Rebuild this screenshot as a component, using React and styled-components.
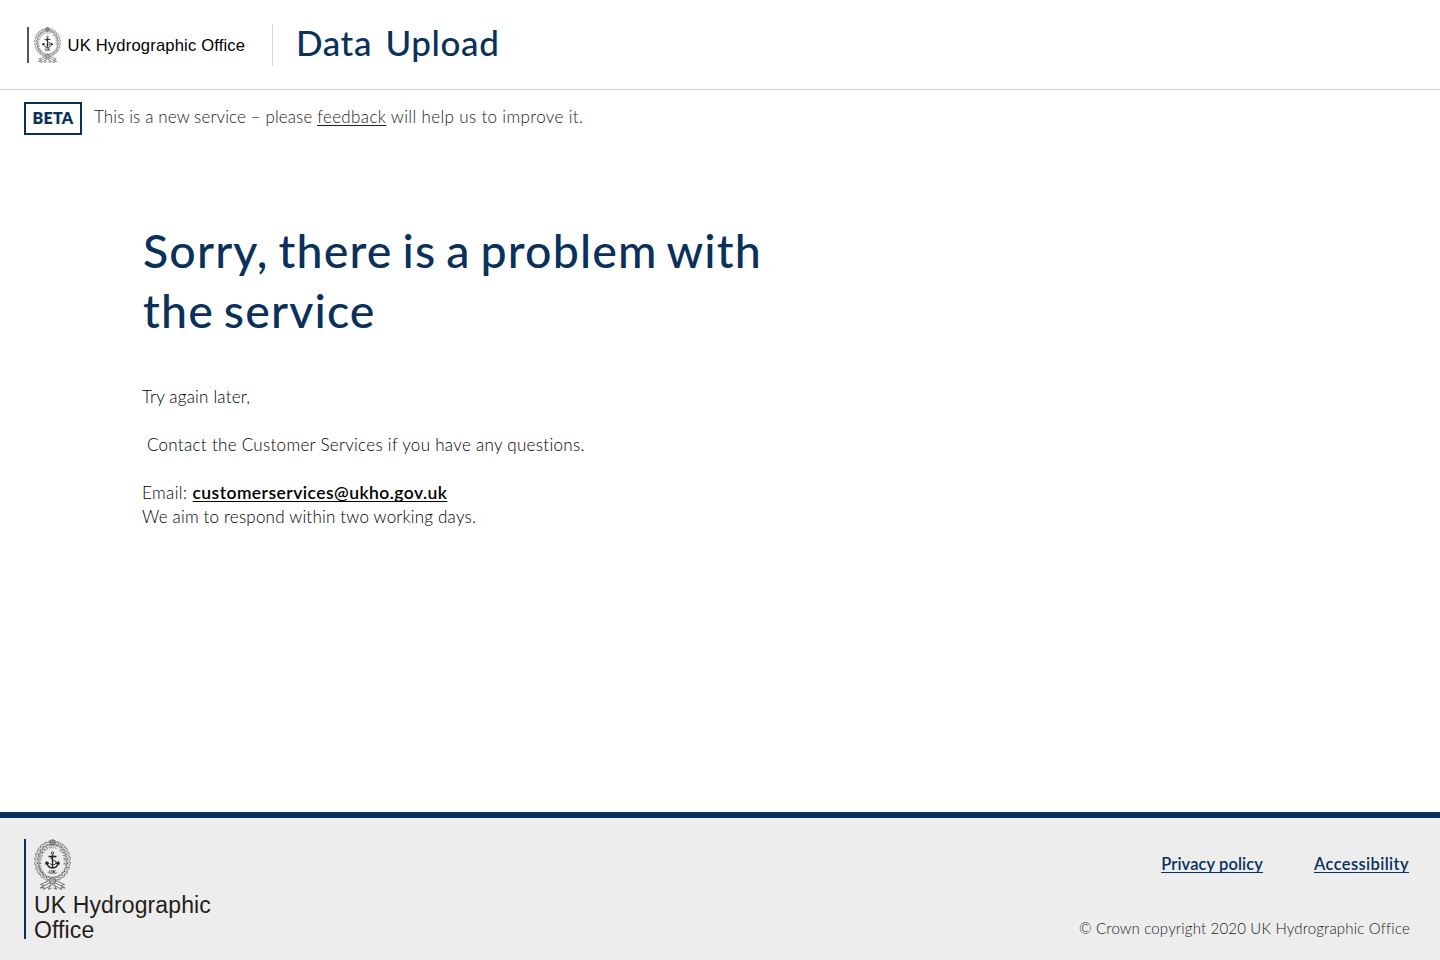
import React from "react";
import styled, { createGlobalStyle } from "styled-components";

const navy = "#09315b";

const GlobalStyle = createGlobalStyle`
  *, *::before, *::after { box-sizing: border-box; }
  body { margin: 0; background: #fff; font-family: Lato, "Liberation Sans", sans-serif; font-variant-ligatures: none; }
`;

const Page = styled.div`
  display: flex;
  flex-direction: column;
  height: 960px;
  overflow: hidden;
`;

const Header = styled.header`
  display: flex;
  align-items: flex-start;
  height: 90px;
  padding: 24px 24px 0 27px;
  border-bottom: 1px solid #d5d5d5;
`;

const HeaderBrand = styled.a`
  display: flex;
  width: 246px;
  height: 42px;
  padding-top: 3px;
  border-right: 1px solid #d5d5d5;
`;

const HeaderMark = styled.span`
  height: 36px;
  padding-left: 5px;
  border-left: 2px solid #555;
`;

const HeaderBrandName = styled.span`
  margin-left: 6.5px;
  padding-top: 9px;
  font: 16.6px/20px "Liberation Sans", Arial, sans-serif;
  letter-spacing: 0.17px;
  color: #000;
  white-space: nowrap;
`;

const ServiceName = styled.span`
  margin-left: 23px;
  font-size: 35px;
  font-weight: 500;
  line-height: 36px;
  letter-spacing: 0.6px;
  word-spacing: 4px;
  color: ${navy};
  white-space: nowrap;
`;

const PhaseBanner = styled.div`
  display: flex;
  align-items: flex-start;
  padding: 12px 24px 0;
`;

const PhaseTag = styled.strong`
  width: 58px;
  height: 33px;
  border: 2px solid ${navy};
  font-size: 16px;
  font-weight: 800;
  line-height: 28px;
  letter-spacing: 0.3px;
  text-align: center;
  color: ${navy};
`;

const PhaseText = styled.span`
  margin-left: 12px;
  padding-top: 3px;
  font-size: 17px;
  font-weight: 300;
  line-height: 24px;
  letter-spacing: 0.11px;
  color: #222;
  white-space: nowrap;
`;

const InlineLink = styled.a`
  color: inherit;
  text-decoration: underline;
  text-decoration-thickness: 1px;
  text-underline-offset: 2px;
  text-decoration-skip-ink: none;
`;

const PhaseTail = styled.span`
  letter-spacing: 0.35px;
`;

const Main = styled.main`
  flex: 1;
  padding: 85px 142px 0;
`;

const Title = styled.h1`
  width: 660px;
  margin: 0 0 45px;
  padding-left: 1px;
  font-size: 46.5px;
  font-weight: 500;
  line-height: 60px;
  letter-spacing: 1.15px;
  word-spacing: -3px;
  color: ${navy};
`;

const Line = styled.p`
  margin: 0 0 ${(p) => (p.$gap ? "24px" : "0")};
  font-size: 17px;
  font-weight: 300;
  line-height: 24px;
  letter-spacing: ${(p) => p.$track}px;
  color: #000;
  white-space: pre;
`;

const EmailLink = styled(InlineLink)`
  font-size: 17.5px;
  font-weight: 600;
  letter-spacing: 0.44px;
`;

const Footer = styled.footer`
  display: flex;
  justify-content: space-between;
  height: 148px;
  padding: 21px 30px 0 24px;
  border-top: 6px solid ${navy};
  background: #ededed;
`;

const FooterBrand = styled.a`
  display: flex;
  flex-direction: column;
  height: 100px;
  padding-left: 8px;
  border-left: 2px solid ${navy};
`;

const FooterBrandName = styled.span`
  padding-top: 3px;
  font: 23px/25px "Liberation Sans", Arial, sans-serif;
  letter-spacing: 0.12px;
  color: #231f20;
  white-space: nowrap;

  > span { display: block; }
`;

const FooterSide = styled.div`
  display: flex;
  flex-direction: column;
  align-items: flex-end;
  padding-top: 13px;
`;

const FooterLinks = styled.nav`
  display: flex;
  gap: 51px;
  padding-right: 1px;
`;

const FooterLink = styled(InlineLink)`
  font-size: 16.5px;
  font-weight: 600;
  line-height: 25px;
  letter-spacing: ${(p) => p.$track}px;
  color: ${navy};
  white-space: nowrap;
`;

const Copyright = styled.span`
  margin-top: 39px;
  font-size: 15px;
  font-weight: 300;
  line-height: 24px;
  letter-spacing: 0.18px;
  color: #222;
  white-space: nowrap;
`;

const CrestSvg = styled.svg`
  flex-shrink: 0;
`;

const leaves = Array.from({ length: 24 }, (_, i) => {
  const a = ((i + 0.5) / 24) * Math.PI * 2;
  return { x: 37 + 31.5 * Math.sin(a), y: 44 - 36 * Math.cos(a), r: (a * 180) / Math.PI };
});

function Crest({ width, height, id }) {
  return (
    <CrestSvg width={width} height={height} viewBox="0 0 74 102" preserveAspectRatio="none" fill="none" stroke="#555" aria-hidden="true">
      <defs>
        <path id={id} d="M21 68 C9 52 13 19 37 19 C61 19 65 52 53 68" />
      </defs>
      {leaves.map((l, i) => (
        <g key={i} transform={`translate(${l.x} ${l.y}) rotate(${l.r})`}>
          <path d="M-5-1C-4-6 3-6 4-1M-4 4C-1 0 3 0 5 4M-2-3l3 6" strokeWidth="1.3" />
        </g>
      ))}
      <ellipse cx="37" cy="44" rx="27.5" ry="32" strokeWidth="0.6" />
      <text fill="#333" stroke="none" fontFamily="Liberation Sans, sans-serif" fontSize="7.6">
        <textPath href={`#${id}`} textLength="108" lengthAdjust="spacing">HYDROGRAPHIC OFFICE</textPath>
      </text>
      <circle cx="37" cy="7" r="5.5" fill="#aaa" strokeWidth="1.8" />
      <path d="M32 7h10M37 2v10" strokeWidth="1" />
      <g stroke="#222" strokeWidth="2.6">
        <circle cx="37" cy="28" r="2.4" strokeWidth="1.7" />
        <path d="M37 31v26M29 35h16M25 47c2 8 7 11 12 11s10-3 12-11M23 51l2-5 5 3M51 51l-2-5-5 3" />
        <path d="M44 36c-5-3-12 0-9 4s11 3 9 8-9 4-12 1" strokeWidth="2" />
      </g>
      <text x="37" y="69" fill="#222" stroke="none" fontFamily="Liberation Sans, sans-serif" fontSize="9.5" fontWeight="700" textAnchor="middle">·UK·</text>
      <ellipse cx="37" cy="84" rx="6.5" ry="7" fill="#aaa" strokeWidth="1.4" />
      <path
        d="M31 88 12 98l8-1-1 4 16-9M43 88l19 10-8-1 1 4-16-9M29 84 13 91l7 2M45 84l16 7-7 2M33 92l-4 9 6-3M41 92l4 9-6-3"
        strokeWidth="1.6"
      />
    </CrestSvg>
  );
}

export default function App() {
  return (
    <Page>
      <GlobalStyle />
      <Header>
        <HeaderBrand>
          <HeaderMark>
            <Crest width={27} height={36} id="crest-arc-header" />
          </HeaderMark>
          <HeaderBrandName>UK Hydrographic Office</HeaderBrandName>
        </HeaderBrand>
        <ServiceName>Data Upload</ServiceName>
      </Header>
      <PhaseBanner>
        <PhaseTag>BETA</PhaseTag>
        <PhaseText>
          This is a new service – please{" "}
          <PhaseTail>
            <InlineLink>feedback</InlineLink> will help us to improve it.
          </PhaseTail>
        </PhaseText>
      </PhaseBanner>
      <Main>
        <Title>
          Sorry, there is a problem with
          <br />
          the service
        </Title>
        <Line $gap $track={0.2}>Try again later,</Line>
        <Line $gap $track={0.3}>{" Contact the Customer Services if you have any questions."}</Line>
        <Line $track={0.4}>
          Email: <EmailLink>customerservices@ukho.gov.uk</EmailLink>
        </Line>
        <Line $track={0.2}>We aim to respond within two working days.</Line>
      </Main>
      <Footer>
        <FooterBrand>
          <Crest width={37} height={51} id="crest-arc-footer" />
          <FooterBrandName>
            <span>UK Hydrographic</span>
            <span>Office</span>
          </FooterBrandName>
        </FooterBrand>
        <FooterSide>
          <FooterLinks>
            <FooterLink $track={0.1}>Privacy policy</FooterLink>
            <FooterLink $track={0.38}>Accessibility</FooterLink>
          </FooterLinks>
          <Copyright>© Crown copyright 2020 UK Hydrographic Office</Copyright>
        </FooterSide>
      </Footer>
    </Page>
  );
}
